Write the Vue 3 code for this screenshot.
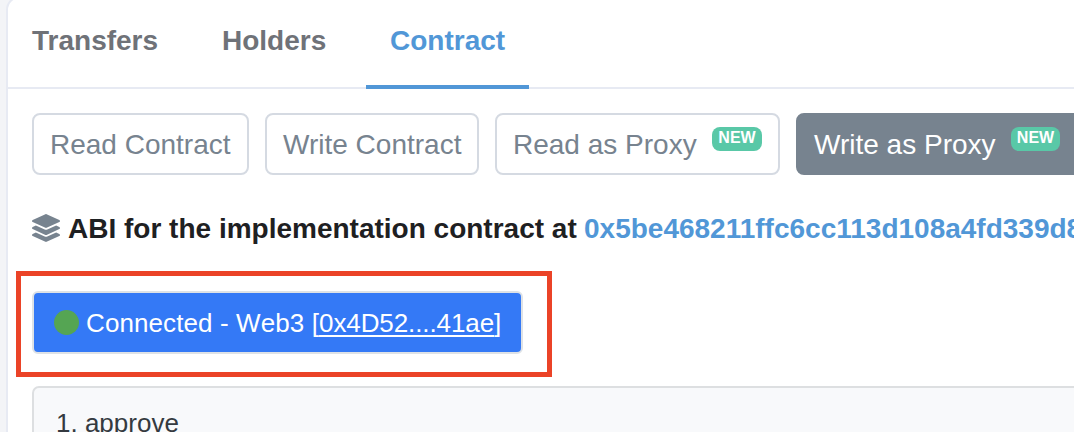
<script setup>
const tabs = [
  { label: 'Transfers', width: 'w-transfers' },
  { label: 'Holders', width: 'w-holders' },
  { label: 'Contract', width: 'w-contract', active: true },
]
const modes = [
  { label: 'Read Contract', width: 'm-read' },
  { label: 'Write Contract', width: 'm-write' },
  { label: 'Read as Proxy', width: 'm-proxy', isNew: true },
  { label: 'Write as Proxy', width: 'm-proxy', isNew: true, active: true },
]
</script>

<template>
  <div class="page">
    <main class="card">
      <nav class="tabs">
        <a v-for="t in tabs" :key="t.label" class="tab" :class="[t.width, { active: t.active }]">{{ t.label }}</a>
      </nav>
      <div class="modes">
        <button v-for="m in modes" :key="m.label" class="mode" :class="[m.width, { active: m.active }]">
          <span class="label">{{ m.label }}</span>
          <span v-if="m.isNew" class="badge">NEW</span>
        </button>
      </div>
      <div class="abi">
        <svg class="layers" viewBox="0 0 512 512" fill="currentColor">
          <path d="M12.41 148.02l232.94 105.67c6.8 3.09 14.49 3.09 21.29 0l232.94-105.67c16.55-7.51 16.55-32.52 0-40.03L266.65 2.31a25.607 25.607 0 0 0-21.29 0L12.41 107.98c-16.55 7.51-16.55 32.53 0 40.04zm487.18 88.28l-58.09-26.33-161.64 73.27c-7.56 3.43-15.59 5.17-23.86 5.17s-16.29-1.74-23.86-5.17L70.51 209.97l-58.1 26.33c-16.55 7.5-16.55 32.5 0 40l232.94 105.59c6.8 3.08 14.49 3.08 21.29 0L499.59 276.3c16.55-7.5 16.55-32.5 0-40zm0 127.8l-57.87-26.23-161.86 73.37c-7.56 3.43-15.59 5.17-23.86 5.17s-16.29-1.74-23.86-5.17L70.29 337.87 12.41 364.1c-16.55 7.5-16.55 32.5 0 40l232.94 105.59c6.8 3.08 14.49 3.08 21.29 0L499.59 404.1c16.55-7.5 16.55-32.5 0-40z" />
        </svg>
        <span class="abi-text">ABI for the implementation contract at</span>
        <a class="address">0x5be468211ffc6cc113d108a4fd339d8</a>
      </div>
      <div class="highlight">
        <button class="connect">
          <span class="dot"></span>
          <span class="status">Connected - Web3 [<span class="wallet">0x4D52....41ae</span>]</span>
        </button>
      </div>
      <section class="panel">1. approve</section>
    </main>
  </div>
</template>

<style>
html, body { margin: 0; overflow: hidden; }
</style>

<style scoped>
.page {
  box-sizing: border-box;
  height: 432px;
  padding-left: 6px;
  overflow: hidden;
  background: #f3f4f7;
  font-family: "Liberation Sans", Arial, sans-serif;
  font-size: 28px;
  white-space: nowrap;
}
.card {
  box-sizing: border-box;
  width: 1200px;
  height: 480px;
  margin-top: -4px;
  border: 2px solid #e7eaf3;
  border-radius: 14px;
  background: #fff;
}
.tabs {
  box-sizing: border-box;
  display: flex;
  height: 91px;
  border-bottom: 2px solid #e7eaf3;
}
.tab {
  box-sizing: border-box;
  height: 91px;
  padding: 27px 0 0 24px;
  line-height: 32px;
  font-weight: 700;
  color: #6f7278;
}
.tab.active { color: #5197d7; border-bottom: 4px solid #5197d7; }
.w-transfers { width: 190px; }
.w-holders { width: 168px; }
.w-contract { width: 163px; }
.modes { display: flex; gap: 16px; padding: 24px 0 0 24px; }
.mode {
  box-sizing: border-box;
  flex: none;
  display: flex;
  height: 62px;
  margin: 0;
  padding: 14px 0 0 16px;
  border: 2px solid #d5dae2;
  border-radius: 8px;
  background: #fff;
  color: #77838f;
  font: inherit;
  line-height: 32px;
}
.mode.active { background: #77838f; border-color: #77838f; color: #fff; }
.m-read { width: 217px; }
.m-write { width: 214px; }
.m-proxy { width: 285px; }
.m-proxy .label { width: 199px; text-align: left; }
.m-proxy.active .label { width: 197px; }
.badge {
  box-sizing: border-box;
  width: 50px;
  height: 24px;
  margin-top: -2px;
  border-radius: 8px;
  background: #59c8a7;
  color: #fff;
  font-size: 16px;
  font-weight: 700;
  line-height: 22px;
  text-align: center;
}
.active .badge { width: 49px; }
.abi {
  display: flex;
  align-items: center;
  height: 32px;
  margin: 38px 0 0 24px;
  font-weight: 700;
  color: #1e2022;
}
.layers { flex: none; width: 28px; height: 28px; margin: 0 8px 3px 0; color: #77838f; }
.abi-text { width: 516px; }
.address { color: #5197d7; }
.highlight {
  box-sizing: border-box;
  width: 536px;
  height: 106px;
  margin: 26px 0 0 8px;
  padding: 15px 0 0 11px;
  border: 5px solid #eb4327;
}
.connect {
  box-sizing: border-box;
  display: flex;
  align-items: center;
  width: 491px;
  height: 63px;
  padding: 0 0 0 20px;
  border: 2px solid #dee2e6;
  border-radius: 6px;
  background: #3479f6;
  color: #fff;
  font: inherit;
  font-size: 26px;
}
.dot { width: 25px; height: 25px; margin-right: 7px; border-radius: 50%; background: #55a553; }
.status { padding-top: 2px; letter-spacing: 0.1px; font-kerning: none; }
.wallet { letter-spacing: -0.1px; text-decoration: underline; text-decoration-thickness: 2px; text-underline-offset: 3px; text-decoration-skip-ink: none; }
.panel {
  box-sizing: border-box;
  width: 1140px;
  height: 90px;
  margin: 9px 0 0 24px;
  padding: 20px 0 0 22px;
  border: 2px solid #dddfe1;
  border-radius: 7px;
  background: #f8f9fb;
  color: #343a40;
  font-size: 26px;
  line-height: 30px;
}
</style>
